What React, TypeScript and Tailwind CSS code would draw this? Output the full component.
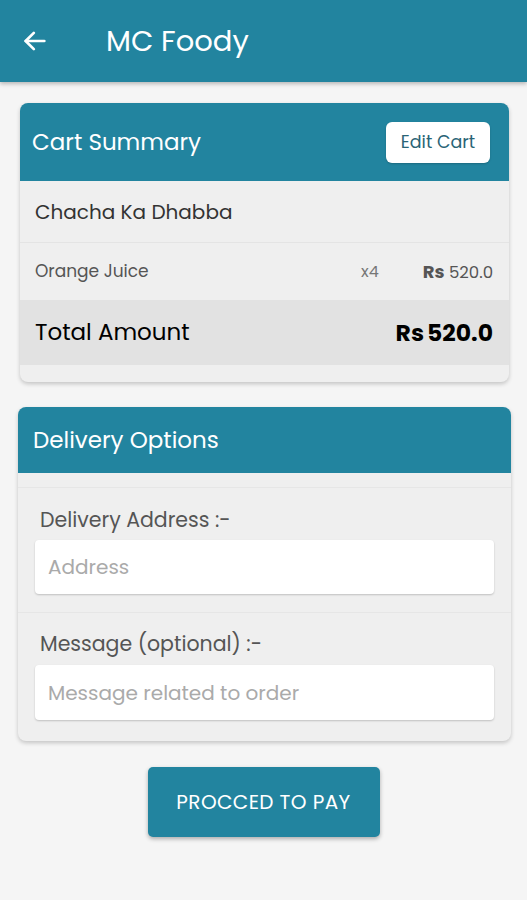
import React from "react";

export default function App() {
  const font = { fontFamily: '"Poppins", "Lato", "Noto Sans", sans-serif' };
  return (
    <div className="w-[527px] h-[900px] bg-[#f5f5f5] flex flex-col" style={font}>
      <div className="h-[82px] bg-[#22849f] flex items-center shadow-[0_2px_4px_rgba(0,0,0,0.25)] shrink-0">
        <svg className="ml-[21px]" width="28" height="28" viewBox="0 0 24 24" fill="none" stroke="white" strokeWidth="2.3" strokeLinecap="round" strokeLinejoin="round">
          <path d="M20 12H4" />
          <path d="M11 5l-7 7 7 7" />
        </svg>
        <div className="ml-[57px] text-white text-[29px] leading-none">MC Foody</div>
      </div>

      <div className="ml-[20px] w-[489px] mt-[21px] rounded-[8px] bg-[#efefef] shadow-[0_2px_4px_rgba(0,0,0,0.2)] overflow-hidden">
        <div className="h-[78px] bg-[#22849f] flex items-center justify-between pl-[12px] pr-[19px]">
          <div className="text-white text-[23px]">Cart Summary</div>
          <div className="w-[104px] h-[41px] bg-white rounded-[6px] flex items-center justify-center text-[#2a6476] text-[17.5px] shadow-[0_1px_2px_rgba(0,0,0,0.2)]">
            Edit Cart
          </div>
        </div>
        <div className="h-[62px] flex items-center pl-[15px] border-b border-[#e4e4e4] text-[20px] text-[#333]">
          Chacha Ka Dhabba
        </div>
        <div className="h-[57px] flex items-center pl-[15px] pr-[16px] text-[#555]">
          <div className="flex-1 text-[17px]">Orange Juice</div>
          <div className="text-[16px] text-[#777] mr-[44px]">x4</div>
          <div className="text-[16.5px]">
            <span className="font-bold text-[18px]">Rs</span> 520.0
          </div>
        </div>
        <div className="h-[65px] bg-[#e2e2e2] flex items-center justify-between pl-[15px] pr-[16px] text-black">
          <div className="text-[23px]">Total Amount</div>
          <div className="text-[23.5px] font-bold">
            Rs<span className="ml-[3px]">520.0</span>
          </div>
        </div>
        <div className="h-[17px]" />
      </div>

      <div className="ml-[18px] w-[493px] mt-[25px] rounded-[8px] bg-[#efefef] shadow-[0_2px_4px_rgba(0,0,0,0.2)] overflow-hidden">
        <div className="h-[66px] bg-[#22849f] flex items-center pl-[15px]">
          <div className="text-white text-[23px]">Delivery Options</div>
        </div>
        <div className="h-[15px] border-b border-[#e6e6e6]" />
        <div className="px-[17px] pt-[18px] pb-[18px] border-b border-[#e6e6e6]">
          <div className="pl-[5px] text-[20.5px] text-[#555] leading-[28px]">Delivery Address :-</div>
          <div className="mt-[6px] h-[54px] bg-white rounded-[4px] shadow-[0_1px_2px_rgba(0,0,0,0.2)] flex items-center pl-[13px] text-[20px] text-[#aaa]">
            Address
          </div>
        </div>
        <div className="px-[17px] pt-[17px] pb-[21px]">
          <div className="pl-[5px] text-[20.5px] text-[#555] leading-[28px]">Message (optional) :-</div>
          <div className="mt-[7px] h-[55px] bg-white rounded-[4px] shadow-[0_1px_2px_rgba(0,0,0,0.2)] flex items-center pl-[13px] text-[20px] text-[#aaa]">
            Message related to order
          </div>
        </div>
      </div>

      <div className="flex justify-center mt-[26px]">
        <div className="w-[232px] h-[70px] bg-[#22849f] rounded-[5px] shadow-[0_2px_4px_rgba(0,0,0,0.3)] flex items-center justify-center text-white text-[20px] tracking-[0.4px]">
          PROCCED TO PAY
        </div>
      </div>
    </div>
  );
}
